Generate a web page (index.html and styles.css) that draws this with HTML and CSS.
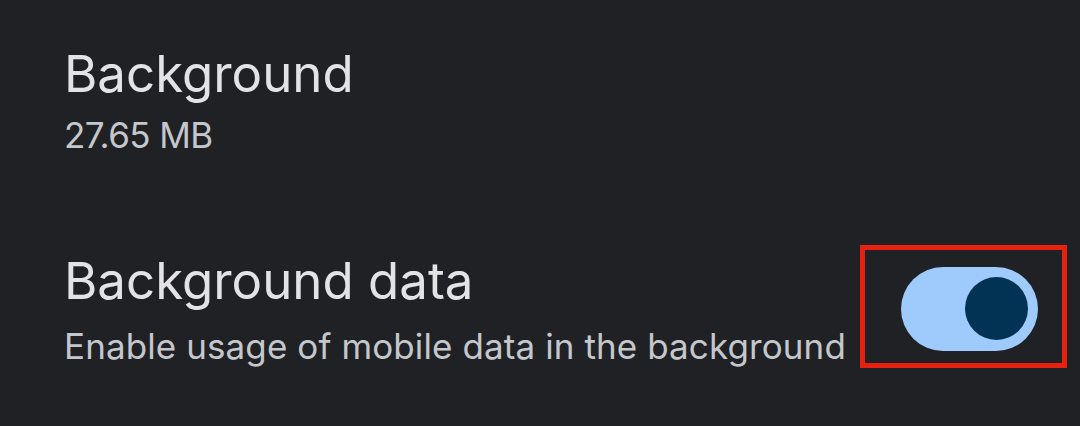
FILE: index.html
```html
<!DOCTYPE html>
<html>
<head>
<meta charset="utf-8">
<link rel="stylesheet" href="styles.css">
</head>
<body>
<div class="list">
  <div class="item usage">
    <div class="texts">
      <div class="title">Background</div>
      <div class="summary s1">27.65 MB</div>
    </div>
  </div>
  <div class="item toggle-item">
    <div class="texts t2">
      <div class="title">Background data</div>
      <div class="summary s2">Enable usage of mobile data in the background</div>
    </div>
    <div class="highlight">
      <div class="switch on"><div class="thumb"></div></div>
    </div>
  </div>
</div>
</body>
</html>
```
FILE: styles.css
```css
html, body {
  margin: 0;
  padding: 0;
  background: #202124;
  width: 1080px;
  height: 426px;
  overflow: hidden;
}
.list {
  display: flex;
  flex-direction: column;
  font-family: Inter, Roboto, "Noto Sans", sans-serif;
}
.item {
  display: flex;
  align-items: flex-start;
  padding-left: 64px;
  padding-right: 13px;
}
.usage {
  padding-top: 44px;
}
.toggle-item {
  margin-top: 90px;
  justify-content: space-between;
}
.texts {
  display: flex;
  flex-direction: column;
}
.t2 {
  padding-top: 6px;
}
.title {
  font-size: 51px;
  line-height: 60px;
  color: #e3e3e6;
}
.summary {
  font-size: 35px;
  line-height: 40px;
  color: #c4c7cc;
}
.s1 {
  margin-top: 11px;
  letter-spacing: -0.6px;
}
.s2 {
  margin-top: 15px;
  letter-spacing: 0.1px;
}
.highlight {
  border: 5px solid #e8200f;
  width: 197px;
  height: 113px;
  display: flex;
  align-items: center;
  justify-content: center;
  box-sizing: content-box;
}
.switch {
  width: 137px;
  height: 84px;
  border-radius: 42px;
  background: #9ecbfb;
  display: flex;
  align-items: center;
  justify-content: flex-end;
  padding: 0 10px;
  box-sizing: border-box;
  margin-left: 12px;
  margin-top: 4px;
}
.thumb {
  width: 63px;
  height: 63px;
  border-radius: 50%;
  background: #023254;
}
```
